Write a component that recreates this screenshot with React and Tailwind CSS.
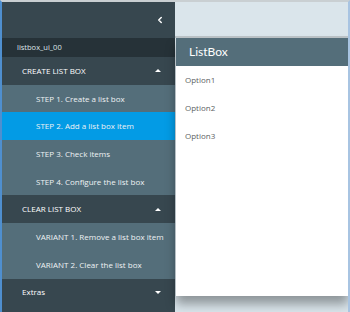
import { ChevronLeft } from 'lucide-react';

const steps = [
  { label: 'STEP 1. Create a list box' },
  { label: 'STEP 2. Add a list box item', active: true },
  { label: 'STEP 3. Check items' },
  { label: 'STEP 4. Configure the list box' },
];

const variants = [
  { label: 'VARIANT 1. Remove a list box item' },
  { label: 'VARIANT 2. Clear the list box' },
];

function Caret({ up }) {
  return (
    <svg width="6" height="3" viewBox="0 0 6 3" className="mr-[14px]">
      {up ? <path d="M0 3 L3 0 L6 3 Z" fill="#ffffff" /> : <path d="M0 0 L3 3 L6 0 Z" fill="#ffffff" />}
    </svg>
  );
}

function Header({ label, up }) {
  return (
    <div className="flex h-[27.7px] items-center justify-between bg-[#37474f] pl-5 text-[8px] text-white">
      <span>{label}</span>
      <Caret up={up} />
    </div>
  );
}

function Item({ label, active }) {
  return (
    <div
      className={
        'flex h-[27.7px] items-center whitespace-nowrap pl-[34px] text-[8px] text-[#eef2f4] ' +
        (active ? 'bg-[#039be5]' : 'bg-[#546e7a]')
      }
    >
      {label}
    </div>
  );
}

export default function App() {
  return (
    <div
      className="flex h-[312px] w-[350px] overflow-hidden border-t-2 border-l-2 border-r-2 border-t-[#c9cfd2] border-l-[#4f8fcf] border-r-[#a8c4e2] bg-[#dae5eb]"
      style={{ fontFamily: '"Open Sans", "Noto Sans", sans-serif' }}
    >
      <div className="flex w-[173px] shrink-0 flex-col bg-[#37474f]">
        <div className="flex h-[36px] items-center justify-end pr-[10px] text-white">
          <ChevronLeft size={10} strokeWidth={3.5} />
        </div>
        <div className="flex h-[19px] items-center bg-[#263238] pl-[15px] text-[7.5px] text-[#dfe5e8]">
          listbox_ui_00
        </div>
        <Header label="CREATE LIST BOX" up />
        {steps.map((s) => (
          <Item key={s.label} {...s} />
        ))}
        <Header label="CLEAR LIST BOX" up />
        {variants.map((s) => (
          <Item key={s.label} {...s} />
        ))}
        <Header label="Extras" />
      </div>
      <div className="flex flex-1 flex-col">
        <div className="h-[36px] shrink-0 border-b-2 border-[#bcc4c8]" />
        <div className="ml-px flex h-[258px] flex-col bg-white shadow-[0_8px_10px_rgba(0,0,0,0.35)]">
          <div
            className="flex h-[28px] items-center bg-[#546e7a] pl-[13px] text-[12px] text-white"
            style={{ fontFamily: 'Lato, "Open Sans", sans-serif' }}
          >
            ListBox
          </div>
          <div className="flex flex-col text-[8px] text-[#5c5f62]">
            <div className="flex h-[28px] items-center pl-[9px]">Option1</div>
            <div className="flex h-[28px] items-center pl-[9px]">Option2</div>
            <div className="flex h-[28px] items-center pl-[9px]">Option3</div>
          </div>
        </div>
      </div>
    </div>
  );
}
